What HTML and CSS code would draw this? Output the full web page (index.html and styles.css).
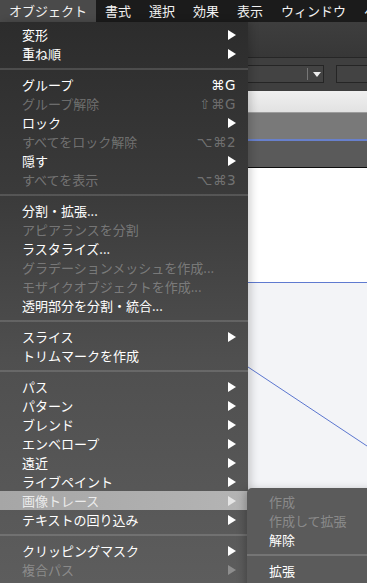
FILE: index.html
```html
<!DOCTYPE html>
<html lang="ja">
<head>
    <meta charset="UTF-8">
    <meta name="viewport" content="width=device-width, initial-scale=1.0">
    <title>オブジェクト メニュー</title>
    <link rel="stylesheet" href="styles.css">
</head>
<body>
    <div class="menubar">
        <span class="menubar-item active">オブジェクト</span>
        <span class="menubar-item">書式</span>
        <span class="menubar-item">選択</span>
        <span class="menubar-item">効果</span>
        <span class="menubar-item">表示</span>
        <span class="menubar-item">ウィンドウ</span>
        <span class="menubar-item">ヘルプ</span>
    </div>

    <div class="screen">
        <div class="menu">
            <div class="item"><span>変形</span><i class="arrow"></i></div>
            <div class="item"><span>重ね順</span><i class="arrow"></i></div>
            <div class="sep"></div>
            <div class="item"><span>グループ</span><span class="key">⌘G</span></div>
            <div class="item disabled"><span>グループ解除</span><span class="key">⇧⌘G</span></div>
            <div class="item"><span>ロック</span><i class="arrow"></i></div>
            <div class="item disabled"><span>すべてをロック解除</span><span class="key">⌥⌘2</span></div>
            <div class="item"><span>隠す</span><i class="arrow"></i></div>
            <div class="item disabled"><span>すべてを表示</span><span class="key">⌥⌘3</span></div>
            <div class="sep"></div>
            <div class="item"><span>分割・拡張...</span></div>
            <div class="item disabled"><span>アピアランスを分割</span></div>
            <div class="item"><span>ラスタライズ...</span></div>
            <div class="item disabled"><span>グラデーションメッシュを作成...</span></div>
            <div class="item disabled"><span>モザイクオブジェクトを作成...</span></div>
            <div class="item"><span>透明部分を分割・統合...</span></div>
            <div class="sep"></div>
            <div class="item"><span>スライス</span><i class="arrow"></i></div>
            <div class="item"><span>トリムマークを作成</span></div>
            <div class="sep"></div>
            <div class="item"><span>パス</span><i class="arrow"></i></div>
            <div class="item"><span>パターン</span><i class="arrow"></i></div>
            <div class="item"><span>ブレンド</span><i class="arrow"></i></div>
            <div class="item"><span>エンベロープ</span><i class="arrow"></i></div>
            <div class="item"><span>遠近</span><i class="arrow"></i></div>
            <div class="item"><span>ライブペイント</span><i class="arrow"></i></div>
            <div class="item selected"><span>画像トレース</span><i class="arrow"></i></div>
            <div class="item"><span>テキストの回り込み</span><i class="arrow"></i></div>
            <div class="sep"></div>
            <div class="item"><span>クリッピングマスク</span><i class="arrow"></i></div>
            <div class="item disabled"><span>複合パス</span><i class="arrow"></i></div>
        </div>

        <div class="workspace">
            <div class="panel-bar"></div>
            <div class="options-bar">
                <div class="dropdown"><span class="dropdown-divider"></span><span class="dropdown-arrow"></span></div>
                <div class="field"></div>
            </div>
            <div class="tab-bar"></div>
            <div class="ruler-light"></div>
            <div class="guide-blue"></div>
            <div class="ruler-dark"></div>
            <div class="artboard"></div>
            <div class="pasteboard">
                <svg width="119" height="300" viewBox="0 0 119 300">
                    <line x1="0" y1="84" x2="119" y2="163" stroke="#5b76cf" stroke-width="1"/>
                </svg>
            </div>
        </div>

        <div class="submenu">
            <div class="item disabled"><span>作成</span></div>
            <div class="item disabled"><span>作成して拡張</span></div>
            <div class="item"><span>解除</span></div>
            <div class="sep"></div>
            <div class="item"><span>拡張</span></div>
        </div>
    </div>
</body>
</html>
```

FILE: styles.css
```css
body {
    margin: 0;
    width: 367px;
    height: 583px;
    overflow: hidden;
    background: #3a3a3a;
    font-family: "Noto Sans CJK JP", "DejaVu Sans", sans-serif;
    font-size: 13px;
    color: #fff;
}

/* top menu bar */
.menubar {
    display: flex;
    height: 22px;
    background: #1b1b1b;
    white-space: nowrap;
}
.menubar-item {
    padding: 0 9px;
    line-height: 22px;
    color: #f2f2f2;
}
.menubar-item.active {
    background: #4a4a4a;
}

.screen {
    position: relative;
    display: flex;
    height: 561px;
}

/* main dropdown menu */
.menu {
    position: relative;
    z-index: 2;
    width: 248px;
    flex-shrink: 0;
    padding-top: 3px;
    background: linear-gradient(#2c2c2c, #3a3a3a 30%, #4f4f4f 60%, #5d5d5d);
    box-shadow: 3px 0 8px rgba(0, 0, 0, 0.18);
}
.item {
    display: flex;
    justify-content: space-between;
    align-items: center;
    height: 19px;
    padding: 0 12px 0 22px;
    white-space: nowrap;
    color: #fff;
}
.item.disabled {
    color: rgba(255, 255, 255, 0.3);
}
.item.selected {
    background: linear-gradient(to right, #a6a6a6, #b4b4b4);
    color: #ececec;
}
.key {
    font-family: "DejaVu Sans", "Noto Sans CJK JP", sans-serif;
    font-size: 13.5px;
    letter-spacing: 0.5px;
}
.arrow {
    width: 0;
    height: 0;
    border-left: 8px solid #fff;
    border-top: 5px solid transparent;
    border-bottom: 5px solid transparent;
}
.item.disabled .arrow {
    border-left-color: rgba(255, 255, 255, 0.3);
}
.item.selected .arrow {
    border-left-color: #e6e6e6;
}
.sep {
    height: 2px;
    margin: 5px 0;
    background: rgba(255, 255, 255, 0.14);
}

/* application window behind the menu */
.workspace {
    flex: 1;
    display: flex;
    flex-direction: column;
    overflow: hidden;
}
.panel-bar {
    height: 35px;
    background: linear-gradient(#3e3e3e, #373737);
    border-bottom: 1px solid #262626;
}
.options-bar {
    display: flex;
    gap: 12px;
    height: 33px;
    padding-top: 7px;
    box-sizing: border-box;
    background: #3f3f3f;
}
.dropdown {
    position: relative;
    width: 84px;
    height: 18px;
    margin-left: -8px;
    border: 1px solid #252525;
    box-sizing: border-box;
    background: #434343;
    flex-shrink: 0;
}
.dropdown-divider {
    position: absolute;
    left: 66px;
    top: 2px;
    width: 1px;
    height: 12px;
    background: #777;
}
.dropdown-arrow {
    position: absolute;
    left: 72px;
    top: 6px;
    border-top: 5px solid #eee;
    border-left: 4px solid transparent;
    border-right: 4px solid transparent;
}
.field {
    width: 60px;
    height: 18px;
    border: 1px solid #252525;
    box-sizing: border-box;
    background: #434343;
    flex-shrink: 0;
}
.tab-bar {
    height: 22px;
    background: linear-gradient(#f0f0f0, #e2e2e2);
    border-bottom: 1px solid #9c9c9c;
    box-sizing: border-box;
}
.ruler-light {
    height: 26px;
    background: #797979;
}
.guide-blue {
    height: 2px;
    background: #6880cc;
}
.ruler-dark {
    height: 26px;
    background: #5a5a5a;
    border-bottom: 1px solid #0e0e0e;
}
.artboard {
    height: 114px;
    background: #fff;
    border-bottom: 1px solid #5f7ad0;
}
.pasteboard {
    flex: 1;
    background: #f3f4f7;
}
.pasteboard svg {
    display: block;
}

/* image trace submenu */
.submenu {
    position: absolute;
    left: 247px;
    top: 466px;
    z-index: 3;
    width: 130px;
    height: 110px;
    padding-top: 4px;
    background: #5b5b5b;
    border-top-left-radius: 5px;
    box-shadow: -2px 2px 8px rgba(0, 0, 0, 0.25);
}
.submenu .sep {
    background: rgba(255, 255, 255, 0.16);
}
```
